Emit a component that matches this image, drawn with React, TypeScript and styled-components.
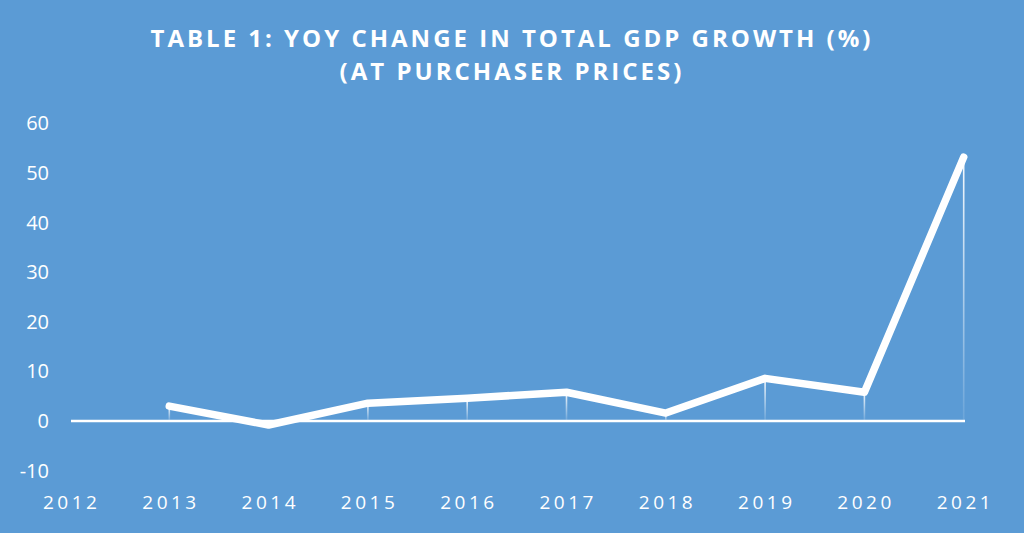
import styled, { createGlobalStyle } from 'styled-components'

const GlobalStyle = createGlobalStyle`
  html, body {
    margin: 0;
    padding: 0;
    background: #5b9bd5;
  }
`

const Card = styled.div`
  width: 1024px;
  height: 533px;
  background: #5b9bd5;
  display: flex;
  flex-direction: column;
  overflow: hidden;
  font-family: 'Open Sans', 'Liberation Sans', sans-serif;
`

const Title = styled.h1`
  margin: 0;
  height: 100px;
  box-sizing: border-box;
  padding-top: 21px;
  text-align: center;
  color: #fff;
  font-size: 24px;
  line-height: 33px;
  font-weight: 700;
  letter-spacing: 3px;
`

const Plot = styled.svg`
  display: block;
  width: 1024px;
  height: 433px;
`

const AxisText = styled.text<{ $spaced?: boolean }>`
  fill: #fff;
  font-family: 'Open Sans', 'Liberation Sans', sans-serif;
  font-size: ${(p) => (p.$spaced ? '19px' : '20px')};
  letter-spacing: ${(p) => (p.$spaced ? '3.5px' : '0')};
`

const years = [2012, 2013, 2014, 2015, 2016, 2017, 2018, 2019, 2020, 2021]
const values: (number | null)[] = [null, 3.0, -0.8, 3.6, 4.6, 5.8, 1.6, 8.6, 5.8, 53.2]
const ticks = [60, 50, 40, 30, 20, 10, 0, -10]

const xAt = (i: number) => 70 + i * 99.3
const yAt = (v: number) => 421 - v * 4.96

export default function App() {
  const pts = values
    .map((v, i) => (v === null ? null : `${xAt(i)},${yAt(v)}`))
    .filter(Boolean)
    .join(' ')

  return (
    <>
      <GlobalStyle />
      <Card>
        <Title>
          TABLE 1: YOY CHANGE IN TOTAL GDP GROWTH (%)
          <br />
          (AT PURCHASER PRICES)
        </Title>
        <Plot viewBox="0 100 1024 433">
          <defs>
            <linearGradient id="drop" x1="0" y1="0" x2="0" y2="1">
              <stop offset="0" stopColor="#fff" stopOpacity="0.95" />
              <stop offset="1" stopColor="#fff" stopOpacity="0.1" />
            </linearGradient>
          </defs>

          {ticks.map((t) => (
            <AxisText key={t} x={49} y={yAt(t) + 7} textAnchor="end">
              {t}
            </AxisText>
          ))}

          {years.map((yr, i) => (
            <AxisText key={yr} $spaced x={xAt(i) + 1.7} y={509} textAnchor="middle">
              {yr}
            </AxisText>
          ))}

          {values.map((v, i) =>
            v !== null && v > 0 ? (
              <rect
                key={i}
                x={xAt(i) - 0.8}
                y={yAt(v)}
                width={1.6}
                height={421 - yAt(v)}
                fill="url(#drop)"
              />
            ) : null,
          )}

          <line x1={71} y1={421} x2={965} y2={421} stroke="#fff" strokeWidth={2.6} />

          <polyline
            points={pts}
            fill="none"
            stroke="#fff"
            strokeWidth={7.5}
            strokeLinejoin="round"
            strokeLinecap="round"
          />
        </Plot>
      </Card>
    </>
  )
}
